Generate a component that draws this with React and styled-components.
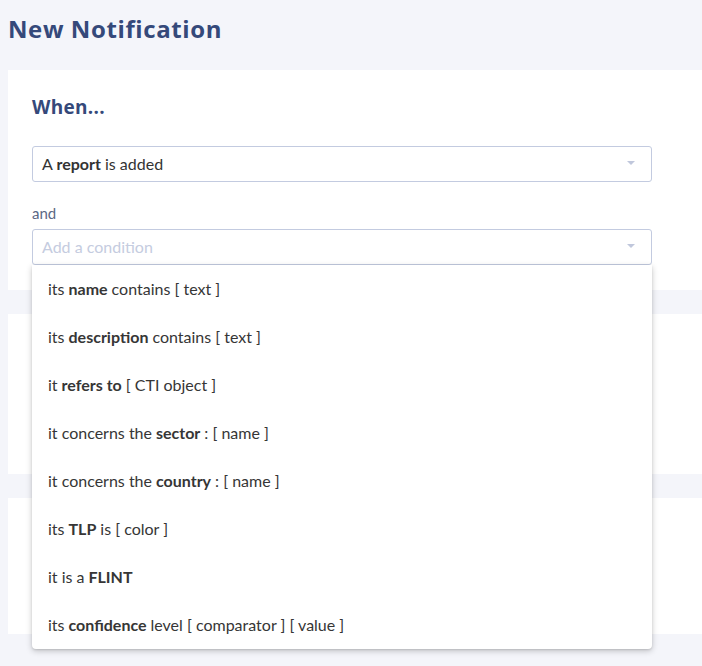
import React from 'react';
import styled, { createGlobalStyle } from 'styled-components';

const GlobalStyle = createGlobalStyle`
  html, body {
    margin: 0;
    padding: 0;
    background: #f4f5fa;
    overflow: hidden;
  }
  body {
    font-family: Lato, "Open Sans", sans-serif;
  }`

const Page = styled.div`
  padding: 0 0 0 8px;
  min-height: 666px;`

const Title = styled.h1`
  margin: 0;
  height: 70px;
  display: flex;
  align-items: center;
  padding-bottom: 14px;
  box-sizing: border-box;
  font-family: "Open Sans", sans-serif;
  font-weight: 700;
  font-size: 24px;
  letter-spacing: 0.6px;
  color: #35497a;`

const Card = styled.section`
  background: #fff;
  height: ${p => p.h}px;
  margin-bottom: 24px;
  padding: 24px 50px 0 24px;
  box-sizing: border-box;`

const CardTitle = styled.h3`
  margin: 0 0 26px;
  height: 26px;
  line-height: 26px;
  font-family: "Open Sans", sans-serif;
  font-weight: 700;
  font-size: 19px;
  letter-spacing: 0.3px;
  color: #35497a;`

const Field = styled.div`
  position: relative;
  width: 620px;`

const Select = styled.div`
  height: 36px;
  border: 1px solid #c3cbe0;
  border-radius: 3px;
  box-sizing: border-box;
  display: flex;
  align-items: center;
  padding: 0 16px 2px 9px;
  font-size: 16px;
  color: ${p => (p.placeholder ? '#c5cce0' : '#333')};
  background: #fff;
  b { font-weight: 700; }`

const Value = styled.span`
  flex: 1;`

const Caret = styled.span`
  width: 0;
  height: 0;
  border-left: 4px solid transparent;
  border-right: 4px solid transparent;
  border-top: 4px solid #c0c7dc;`

const Label = styled.div`
  margin: 22px 0 7px;
  font-size: 15px;
  color: #5b6885;`

const Menu = styled.ul`
  position: absolute;
  left: 0;
  right: 0;
  top: 36px;
  margin: 0;
  padding: 0;
  list-style: none;
  background: #fff;
  border-radius: 0 0 4px 4px;
  box-shadow: 0 2px 6px rgba(0, 0, 0, 0.22), 0 1px 2px rgba(0, 0, 0, 0.1);
  z-index: 10;`

const Option = styled.li`
  height: 48px;
  display: flex;
  align-items: center;
  padding: 0 0 2px 16px;
  box-sizing: border-box;
  font-size: 16px;
  color: #363636;
  b { font-weight: 700; margin: 0 0.25em; }`

const options = [
  ['its', 'name', 'contains [ text ]'],
  ['its', 'description', 'contains [ text ]'],
  ['it', 'refers to', '[ CTI object ]'],
  ['it concerns the', 'sector', ': [ name ]'],
  ['it concerns the', 'country', ': [ name ]'],
  ['its', 'TLP', 'is [ color ]'],
  ['it is a', 'FLINT', ''],
  ['its', 'confidence', 'level [ comparator ] [ value ]'],
];

export default function App() {
  return (
    <Page>
      <GlobalStyle />
      <Title>New Notification</Title>
      <Card h={220}>
        <CardTitle>When...</CardTitle>
        <Field>
          <Select>
            <Value>A <b>report</b> is added</Value>
            <Caret />
          </Select>
        </Field>
        <Label>and</Label>
        <Field>
          <Select placeholder>
            <Value>Add a condition</Value>
            <Caret />
          </Select>
          <Menu>
            {options.map(([pre, bold, post]) => (
              <Option key={bold}>
                {pre}<b>{bold}</b>{post}
              </Option>
            ))}
          </Menu>
        </Field>
      </Card>
      <Card h={160} />
      <Card h={136} />
    </Page>
  );
}
